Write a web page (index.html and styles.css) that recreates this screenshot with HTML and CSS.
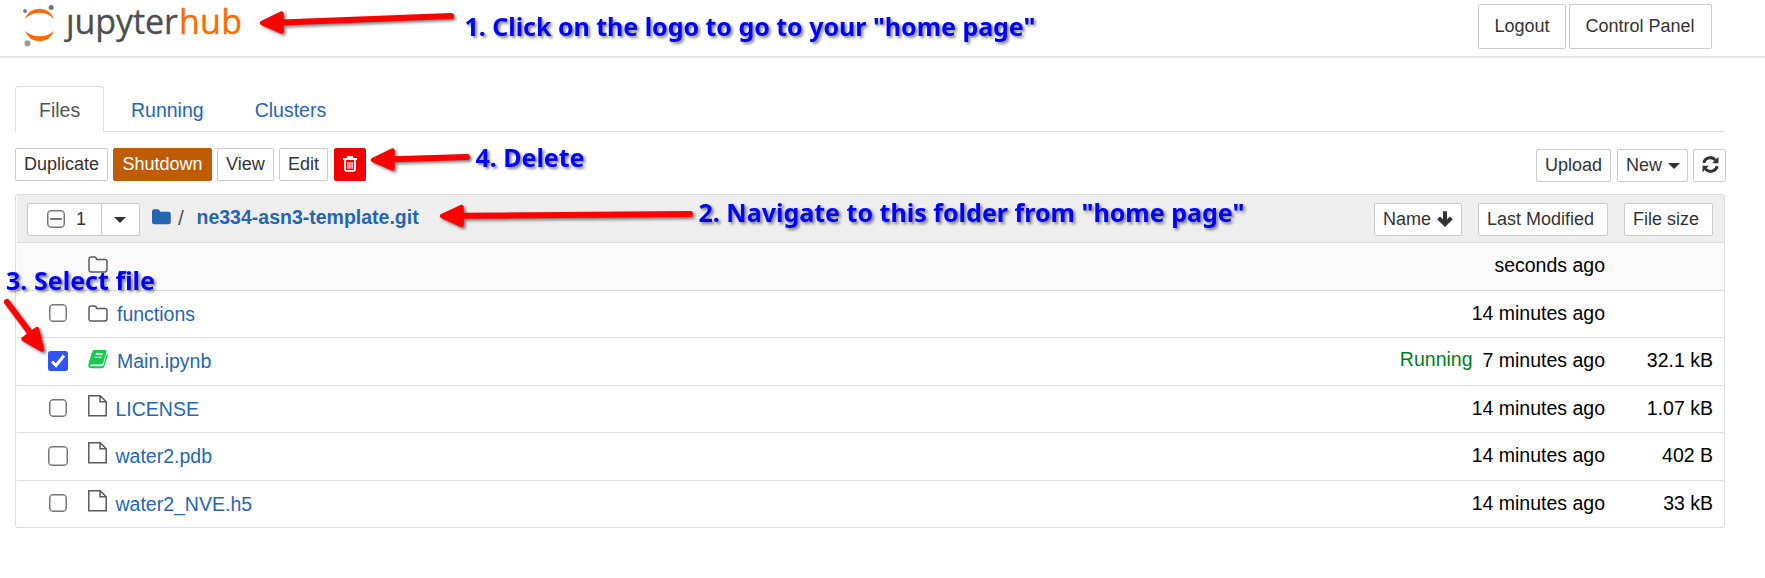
FILE: index.html
```
<!DOCTYPE html>
<html lang="en">
<head>
<meta charset="utf-8">
<title>JupyterHub</title>
<link rel="stylesheet" href="styles.css">
</head>
<body>
<svg class="defs" width="0" height="0" aria-hidden="true">
  <symbol id="folder-o" viewBox="0 0 20 17"><path d="M1 3.2Q1 1 3.2 1h3.1q2 0 2.200 2.400h8.300Q19 3.400 19 5.600v8.200Q19 16 16.800 16H3.200Q1 16 1 13.800Z" fill="none" stroke="#5a5a5a" stroke-width="1.500"/></symbol>
  <symbol id="file-o" viewBox="0 0 19 22"><path d="M.8.8h11.400l6 6v13.900H.8ZM12 .8v6h6" fill="none" stroke="#5a5a5a" stroke-width="1.500"/></symbol>
</svg>

<header class="header">
  <svg class="logo" width="230" height="50" viewBox="0 0 230 50">
    <g transform="translate(-20 0)">
      <path d="M25 19Q29 8.700 39.500 8.700T54 19Q48 12.800 39.500 12.800T25 19Z" fill="#ff6a00"/>
      <path d="M25 31Q29 41.200 39.500 41.200T54 31Q48 36.300 39.500 36.300T25 31Z" fill="#ff6a00"/>
      <circle cx="25" cy="11" r="1.900" fill="#767677"/>
      <circle cx="51.200" cy="7.600" r="2.500" fill="#767677"/>
      <circle cx="27.500" cy="43.300" r="3.100" fill="#9e9e9e"/>
      <text x="66" y="33.500" textLength="112" class="wordmark">ȷupyter</text>
      <text x="179" y="33.500" textLength="63" class="wordmark hub">hub</text>
    </g>
  </svg>
  <div class="account">
    <button class="btn big logout">Logout</button>
    <button class="btn big control">Control Panel</button>
  </div>
</header>

<main class="main">
  <nav class="tabs">
    <a class="tab active">Files</a>
    <a class="tab">Running</a>
    <a class="tab">Clusters</a>
  </nav>

  <div class="toolbar">
    <div class="actions">
      <button class="btn duplicate">Duplicate</button>
      <button class="btn shutdown">Shutdown</button>
      <button class="btn view">View</button>
      <button class="btn edit">Edit</button>
      <button class="btn trash" aria-label="Delete"><svg width="14" height="16" viewBox="0 0 14 16"><path d="M0 3h14M4.300 3l.6-2h4.200l.6 2M2.100 3.500v10.200q0 1.200 1.100 1.200h7.600q1.100 0 1.100-1.200V3.500" fill="none" stroke="#fff" stroke-width="1.900"/><path d="M4.900 6v6.800M7 6v6.800M9.100 6v6.800" stroke="#fff" stroke-width="1.200"/></svg></button>
    </div>
    <div class="actions right">
      <button class="btn upload">Upload</button>
      <button class="btn new">New<i class="caret"></i></button>
      <button class="btn refresh" aria-label="Refresh"><svg width="17" height="17" viewBox="0 0 17 17"><path d="M1.800 6.800A6.700 6.700 0 0 1 13.400 4M15.200 10.200A6.700 6.700 0 0 1 3.600 13" fill="none" stroke="#333" stroke-width="3"/><path d="M16.500.8v6.400h-6.400ZM.5 16.200V9.800h6.400Z" fill="#333"/></svg></button>
    </div>
  </div>

  <section class="list">
    <div class="list-head">
      <div class="selector">
        <button class="btn count"><span class="check"><i class="dash"></i></span>1</button>
        <button class="btn drop"><i class="caret"></i></button>
      </div>
      <svg class="crumb-icon" width="19" height="16" viewBox="0 0 19 16"><path d="M0 2.500Q0 .3 2.200.3h3.600Q8 .3 8 2.800h8.500q2.300 0 2.300 2.200v8q0 2.200-2.300 2.200H2.200Q0 15.200 0 13Z" fill="#2566b1"/></svg>
      <span class="slash">/</span>
      <a class="crumb">ne334-asn3-template.git</a>
      <div class="sorts">
        <button class="btn name">Name<svg width="16" height="16" viewBox="0 0 16 16"><path d="M8 .2v12M1.600 6.800l6.400 6.400 6.400-6.400" fill="none" stroke="#333" stroke-width="4"/></svg></button>
        <button class="btn modified">Last Modified</button>
        <button class="btn size">File size</button>
      </div>
    </div>
    <div class="row parent"><span class="pick"></span><svg class="ico" width="20" height="17"><use href="#folder-o"/></svg><a>..</a><span class="time">seconds ago</span><span class="bytes"></span></div>
    <div class="row short"><span class="pick"><i class="check"></i></span><svg class="ico" width="20" height="17"><use href="#folder-o"/></svg><a>functions</a><span class="time">14 minutes ago</span><span class="bytes"></span></div>
    <div class="row"><span class="pick"><svg class="checked" width="20" height="20" viewBox="0 0 20 20"><rect width="20" height="20" rx="2.500" fill="#3352fb"/><path d="M4 10.500l4 4 8-10" fill="none" stroke="#fff" stroke-width="3"/></svg></span><svg class="ico book" width="20" height="19" viewBox="0 0 20 19"><path d="M6.500 0H17q2 0 1.500 2l-3.200 10.800q-.5 1.700-2.300 1.700H3.500q-1.800 0-1.300 1 .3.800 1.600.8h10q1.200 0 1.600-1.200l3.300-10.900q1.500.3 1 2L16.500 16q-.7 2.300-2.900 2.300H3.800Q0 18.300.3 14.500L4 2Q4.700 0 6.500 0Z" fill="#18c94c"/><path d="M7.800 4h7M6.700 7.300h7" stroke="#fff" stroke-width="1.300"/></svg><a>Main.ipynb</a><span class="running">Running</span><span class="time">7 minutes ago</span><span class="bytes">32.1 kB</span></div>
    <div class="row short file"><span class="pick"><i class="check"></i></span><svg class="ico" width="19" height="22"><use href="#file-o"/></svg><a>LICENSE</a><span class="time">14 minutes ago</span><span class="bytes">1.07 kB</span></div>
    <div class="row file"><span class="pick"><i class="check large"></i></span><svg class="ico" width="19" height="22"><use href="#file-o"/></svg><a>water2.pdb</a><span class="time">14 minutes ago</span><span class="bytes">402 B</span></div>
    <div class="row short file last"><span class="pick"><i class="check"></i></span><svg class="ico" width="19" height="22"><use href="#file-o"/></svg><a>water2_NVE.h5</a><span class="time">14 minutes ago</span><span class="bytes">33 kB</span></div>
  </section>
</main>

<!-- Tutorial callouts drawn over the page -->
<svg class="notes" width="1765" height="578" viewBox="0 0 1765 578">
  <g class="arrow">
    <path d="M451 16L282 22.500" class="shaft"/><path d="M262 23L281.500 13.500V31.500Z"/>
    <path d="M467 157L393 159.300" class="shaft"/><path d="M373 160L392.500 150.500V168.500Z"/>
    <path d="M690 214L462 215.800" class="shaft"/><path d="M442 216L461.500 207V225Z"/>
    <path d="M7 302L31 334" class="shaft"/><path d="M42 349.500L37 329L23.500 339Z"/>
  </g>
  <g class="note">
    <text x="464.500" y="36" textLength="571">1. Click on the logo to go to your "home page"</text>
    <text x="698.500" y="221.500" textLength="546">2. Navigate to this folder from "home page"</text>
    <text x="6" y="290" textLength="149">3. Select file</text>
    <text x="475.500" y="167" textLength="109">4. Delete</text>
  </g>
</svg>
</body>
</html>
```
FILE: styles.css
```
* { box-sizing: border-box; }
body {
  position: relative;
  margin: 0;
  width: 1765px;
  height: 578px;
  overflow: hidden;
  background: #fff;
  color: #000;
  font: 19.5px/28px "Liberation Sans", Arial, sans-serif;
}
svg { display: block; flex: none; overflow: visible; }
.defs { position: absolute; }

.header {
  display: flex;
  justify-content: space-between;
  height: 58px;
  padding: 0 53px 0 20px;
  border-bottom: 2px solid #e7e7e7;
}
.wordmark { font: 34px "Open Sans", "Noto Sans", sans-serif; fill: #4e4e4e; stroke: #4e4e4e; stroke-width: .3px; }
.wordmark.hub { fill: #ff6a00; stroke: #ff6a00; }
.account { display: flex; gap: 3px; padding-top: 4px; }

.btn {
  display: flex;
  align-items: center;
  justify-content: flex-start;
  height: 33px;
  padding: 0 0 2px 8px;
  border: 1px solid #ccc;
  border-radius: 2px;
  background: #fff;
  color: #333;
  font: 18px/26px "Liberation Sans", Arial, sans-serif;
  white-space: nowrap;
}
.big { height: 45px; padding-left: 15.500px; }
.logout { width: 88px; }
.control { width: 143px; }

.main { padding: 28px 40px 0 15px; }
.tabs { display: flex; height: 46px; border-bottom: 1px solid #ddd; }
.tab {
  height: 46px;
  padding: 10px 0 0 27px;
  color: #2566b1;
}
.tab.active {
  width: 89px;
  padding: 9px 0 0 23px;
  border: 1px solid #ddd;
  border-bottom: 0;
  border-radius: 3px 3px 0 0;
  background: #fff;
  color: #555;
}
.tab + .tab + .tab { padding-left: 51px; }

.toolbar { display: flex; justify-content: space-between; margin-right: -1px; padding-top: 16px; height: 62px; }
.actions { display: flex; gap: 5px; }
.actions.right { padding-top: 1px; }
.duplicate { width: 93px; }
.shutdown { width: 99px; background: #bf5b00; border-color: #bf5b00; color: #fff; padding-left: 8.500px; }
.view { width: 57px; }
.edit { width: 49px; }
.trash { width: 32px; margin-left: 1px; padding: 0 0 2px 8px; background: #f20000; border-color: #f20000; }
.upload { width: 75px; }
.new { width: 71px; margin-left: 1px; }
.refresh { width: 33px; padding-left: 8px; }
.caret {
  width: 0;
  border: 6px solid transparent;
  border-top-color: #333;
  border-bottom: 0;
}
.new .caret { margin: 3px 0 0 6px; }

.list {
  height: 334px;
  padding-left: 1px;
  border: 1px solid #ddd;
  border-radius: 3px;
}
.list-head {
  display: flex;
  height: 48px;
  padding: 8px 11px 0 10px;
  background: #eee;
  border-bottom: 1px solid #ddd;
}
.selector { display: flex; }
.count { width: 75px; padding-left: 19px; gap: 11px; border-radius: 2px 0 0 2px; }
.drop { width: 39px; margin-left: -1px; padding-left: 12px; border-radius: 0 2px 2px 0; }
.drop .caret { margin-top: 3px; }
.check {
  display: flex;
  align-items: center;
  justify-content: center;
  width: 18px;
  height: 18px;
  border: 1.500px solid #767676;
  border-radius: 4px;
  background: #fff;
  box-shadow: inset 0 0 0 .5px #767676;
}
.check.large { width: 20px; height: 20px; }
.dash { width: 12px; height: 2px; background: #767676; }
.crumb-icon { margin: 6px 0 0 12px; }
.slash { width: 18.500px; margin: 1px 0 0 7px; color: #555; font-size: 21px; }
.crumb { color: #2566b1; font-weight: bold; }
.sorts { display: flex; margin-left: auto; }
.name { width: 88px; }
.name svg { margin: 0 0 0 6px; }
.modified { width: 130px; margin-left: 16px; }
.size { width: 89px; margin-left: 16px; }

.row {
  display: flex;
  height: 48px;
  padding: 9px 11px 0 31px;
  border-bottom: 1px solid #ddd;
}
.row.short { height: 47px; }
.row.parent { background: #fafafa; }
.row.last { border-bottom: 0; }
.row a { margin-left: 9px; color: #2566b1; }
.row.file a { margin-left: 8.500px; }
.pick { display: flex; justify-content: center; width: 20px; height: 20px; margin: 4px 20px 0 0; }
.ico { margin-top: 5px; }
.parent .ico { margin-top: 4px; }
.ico.book { margin-top: 3px; }
.file .ico { margin-top: 0; }
.time { margin: -1px 0 0 auto; text-align: right; }
.running { margin: -2px 10px 0 auto; color: #007b22; }
.running + .time { margin-left: 0; }
.bytes { width: 108px; margin-top: -1px; text-align: right; }

.notes { position: absolute; left: 0; top: 0; filter: drop-shadow(2px 2px 1.500px rgba(0, 0, 0, .5)); }
.arrow path { fill: #f00; stroke: #f00; stroke-width: 4.500px; stroke-linejoin: round; }
.arrow .shaft { stroke-width: 6px; stroke-linecap: round; }
.note { font: bold 25px "Noto Sans", sans-serif; fill: #00f; }
```
